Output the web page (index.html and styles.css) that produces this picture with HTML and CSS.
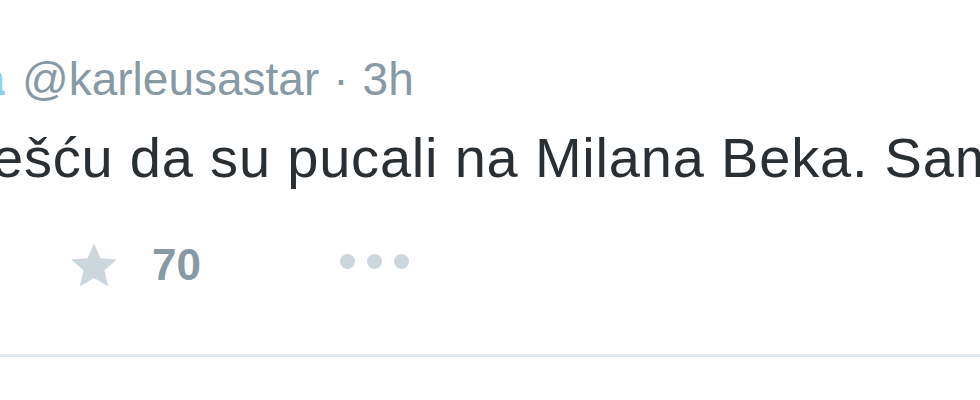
FILE: index.html
```
<!DOCTYPE html>
<html>
<head>
<meta charset="utf-8">
<link rel="stylesheet" href="styles.css">
</head>
<body>
<div class="tweet">
  <div class="header">
    <span class="name">Karleuša</span>
    <span class="handle">@karleusastar</span>
    <span class="sep">·</span>
    <span class="time">3h</span>
  </div>
  <p class="text">ešću da su pucali na Milana Beka. Sam</p>
  <div class="actions">
    <span class="fav">
      <svg class="star" viewBox="0 0 24 24" width="56" height="50" aria-hidden="true">
        <path d="M12 1.5l3.1 7.3 7.9.6-6 5.2 1.9 7.7L12 18.2l-6.9 4.1L7 14.6 1 9.4l7.9-.6z"/>
      </svg>
      <span class="count">70</span>
    </span>
    <span class="more">
      <i></i><i></i><i></i>
    </span>
  </div>
</div>
<div class="divider"></div>
</body>
</html>
```
FILE: styles.css
```
html, body {
  margin: 0;
  padding: 0;
  background: #ffffff;
  overflow: hidden;
}
body {
  width: 980px;
  height: 400px;
  font-family: "Liberation Sans", Arial, sans-serif;
}
.tweet {
  padding-top: 52px;
  height: 302px;
}
.header {
  display: flex;
  align-items: baseline;
  height: 54px;
  font-size: 46px;
  line-height: 54px;
  color: #8899a6;
  white-space: nowrap;
  margin-left: -225px;
}
.name {
  color: #8fd0f2;
  font-weight: bold;
  margin-right: 17px;
  width: 230px;
  overflow: hidden;
  text-align: right;
}
.handle {
  margin-right: 14px;
}
.sep {
  margin-right: 14px;
}
.text {
  margin: 20px 0 0 -8px;
  font-size: 56px;
  line-height: 64px;
  letter-spacing: 0.8px;
  color: #292f33;
  white-space: nowrap;
}
.actions {
  display: flex;
  align-items: center;
  margin-top: 50px;
  margin-left: 66px;
}
.fav {
  display: flex;
  align-items: center;
  gap: 30px;
  width: 274px;
}
.star {
  fill: #ccd6dd;
  display: block;
}
.count {
  font-size: 44px;
  font-weight: bold;
  color: #8899a6;
}
.more {
  display: flex;
  gap: 12px;
  margin-top: -8px;
}
.more i {
  display: block;
  width: 15px;
  height: 15px;
  border-radius: 50%;
  background: #ccd6dd;
}
.divider {
  height: 3px;
  background: #e1e8ed;
}
```
